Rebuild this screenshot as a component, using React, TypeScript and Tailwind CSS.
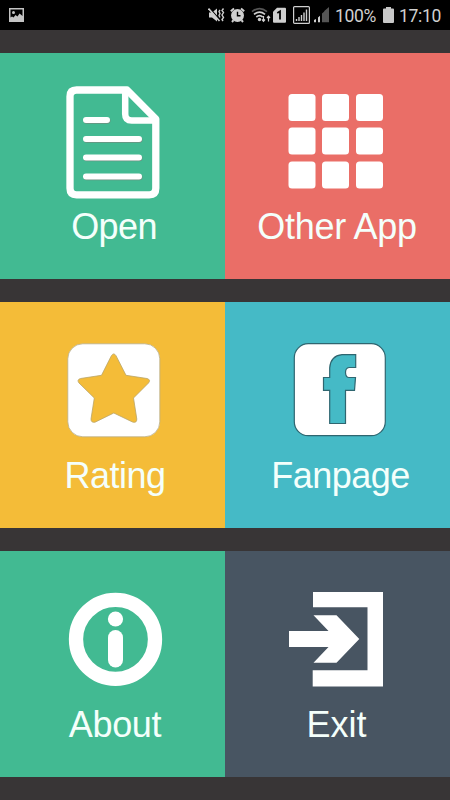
import React from 'react';

type TileProps = {
  label: string;
  bg: string;
  labelClass: string;
  children: React.ReactNode;
};

function PictureIcon() {
  return (
    <svg width="15" height="14" viewBox="0 0 15 14">
      <path fill="#c4c4c4" fillRule="evenodd" d="M0 0h15v14H0zM1.5 1.5v8L3 8.5l1.5 1L6.5 7l2 1.5 2-3 3 2.5V1.5z" />
      <circle cx="4.5" cy="4.5" r="1.5" fill="#c4c4c4" />
    </svg>
  );
}

function MuteIcon() {
  return (
    <svg width="17" height="16" viewBox="0 0 17 16" fill="none" stroke="#cfcfcf">
      <path d="M1 5.5h3L9 1.5v13L4 10.5H1z" fill="#cfcfcf" stroke="none" />
      <path d="M1.5 1 12 13" stroke="#000" strokeWidth="1.2" />
      <path d="M.5 1.5 11.5 14" strokeWidth="1.6" />
      <path d="M12 3l-1 1.5 1 2-1 2 1 2M15.5 1.5l-1.5 2 1.5 2-1.5 2.5 1.5 2.5-1.5 2 1 1.5" strokeWidth="1.4" />
    </svg>
  );
}

function AlarmIcon() {
  return (
    <svg width="15" height="16" viewBox="0 0 15 16">
      <circle cx="7.5" cy="8.5" r="6.5" fill="#cfcfcf" />
      <path d="M.8 4.2 4 1.5M14.2 4.2 11 1.5M3.5 13.2 2 15M11.5 13.2 13 15" stroke="#cfcfcf" strokeWidth="2" />
      <path d="M7.5 4.8v4h3" stroke="#000" strokeWidth="1.4" fill="none" />
    </svg>
  );
}

function WifiIcon() {
  return (
    <svg width="20" height="16" viewBox="0 0 20 16" fill="none" stroke="#cfcfcf" strokeWidth="1.7">
      <path d="M1 4.6q7.5-6 15 0" stroke="#555" />
      <path d="M3 7.3q5.500-4.500 11 0M5.300 10q3.200-2.600 6.400 0" />
      <circle cx="8.500" cy="12.500" r="1.700" fill="#cfcfcf" stroke="none" />
      <path d="M12.500 9v5M11 12.500l1.500 1.800 1.500-1.800M17.500 14.500V9.500M16 11l1.500-1.800L19 11" strokeWidth="1.200" />
    </svg>
  );
}

function SimIcon() {
  return (
    <svg width="13" height="16" viewBox="0 0 13 16">
      <path d="M4 .8h8q1 0 1 1v12.900q0 1-1 1H1q-1 0-1-1V4.800z" fill="#cfcfcf" />
      <path d="M4.300 6 7 4.300v8.200" stroke="#000" strokeWidth="1.800" fill="none" />
    </svg>
  );
}

function BoxedSignalIcon() {
  return (
    <svg width="17" height="18" viewBox="0 0 17 18">
      <rect x=".6" y=".6" width="15.8" height="16.8" rx="1" fill="none" stroke="#cfcfcf" strokeWidth="1.2" />
      <path d="M3.5 15v-2M6 15v-4M8.5 15V9M11 15V6.5M13.5 15V3.5" stroke="#cfcfcf" strokeWidth="1.4" />
    </svg>
  );
}

function SignalIcon() {
  return (
    <svg width="15" height="16" viewBox="0 0 15 16">
      <path d="M0 15.3v-2.3l2-1v3.3zM4 15.3v-4.8l2-1.8v6.6z" fill="#cfcfcf" />
      <path d="M8 15.3V6.5l2.300-2v10.800zM10.300 15.300V4L15 0v15.300z" fill="#555" />
    </svg>
  );
}

function BatteryIcon() {
  return (
    <svg width="11" height="16" viewBox="0 0 11 16">
      <path d="M3 0h5v1.5h2q1 0 1 1V15q0 1-1 1H1q-1 0-1-1V2.5q0-1 1-1h2z" fill="#c8c8c8" />
    </svg>
  );
}

function StatusBar() {
  return (
    <header className="flex h-[30px] items-center bg-black pl-[9px] text-[17.5px] text-[#d0d0d0] font-['Roboto',sans-serif]">
      <PictureIcon />
      <div className="ml-auto flex w-[242px] items-center">
        <MuteIcon />
        <span className="ml-[5px]"><AlarmIcon /></span>
        <span className="ml-[6px]"><WifiIcon /></span>
        <span className="ml-[2px]"><SimIcon /></span>
        <span className="ml-[7px]"><BoxedSignalIcon /></span>
        <span className="ml-[4px]"><SignalIcon /></span>
        <span className="ml-[6px] w-[42px] pt-[2px] leading-[20px] tracking-[-0.3px]">100%</span>
        <span className="ml-[6px]"><BatteryIcon /></span>
        <span className="ml-[5px] pt-[2px] leading-[20px] tracking-[-0.3px]">17:10</span>
      </div>
    </header>
  );
}

function OpenIcon() {
  return (
    <svg width="100" height="120" viewBox="63 83 100 120" fill="none" strokeLinecap="round" strokeLinejoin="round">
      <g stroke="#6f8f80" strokeWidth="6" transform="translate(.5 .8)">
        <path d="M86 120h21M86 139h53M86 157.500h53M86 176.500h53" />
      </g>
      <g stroke="#fff">
        <path d="M76.500 90H127L155.800 119V188.300q0 6.500-6.500 6.500H76.500q-6.500 0-6.500-6.500V96.500q0-6.500 6.500-6.500z" strokeWidth="7.300" />
        <path d="M125.200 91.500V114q0 6.500 6.500 6.500h23" strokeWidth="6.500" />
        <path d="M86 120h21M86 139h53M86 157.500h53M86 176.500h53" strokeWidth="6" />
      </g>
    </svg>
  );
}

const GRID_X = [288.5, 322, 356];
const GRID_Y = [94, 127.5, 161.5];

function GridIcon() {
  return (
    <svg width="100" height="120" viewBox="288 83 100 120" fill="#fff">
      {GRID_Y.map((y) =>
        GRID_X.map((x) => <rect key={`${x}-${y}`} x={x} y={y} width="27" height="27" rx="3.5" />)
      )}
    </svg>
  );
}

function StarIcon() {
  return (
    <svg width="100" height="120" viewBox="63 332 100 120">
      <rect x="67.8" y="343.8" width="92" height="93" rx="15" fill="#fff" stroke="#b9ae8a" strokeWidth=".8" />
      <path
        d="M111.400 355.700q2.400-3.600 4.600 0L126 375.300L147 378.500q4.200 1.200 1.500 4.500L133.500 398L136.800 419q0 4.400-4.300 3L113.800 413L95 422.200q-4 .8-4-3.200L94.300 398L79 383q-2.500-3.300 1.500-4.500L101.500 375.300z"
        fill="#f4bc38"
        stroke="#b9a468"
        strokeWidth=".8"
      />
    </svg>
  );
}

function FacebookIcon() {
  return (
    <svg width="100" height="120" viewBox="288 332 100 120" stroke="#2f6670">
      <rect x="294.300" y="343.700" width="91" height="92" rx="14" fill="#fff" strokeWidth="1.200" />
      <path
        d="M329.700 423.500V390.300H323.500V377.500H329.700V368Q330.500 356 342 354.700H355.700V367.500H349Q345.500 368 345.500 372.500Q345.700 377.500 349 377.500H355.500L354.500 390.300H345.500V423.500z"
        fill="#45bac6"
        strokeWidth="1.200"
      />
    </svg>
  );
}

function InfoIcon() {
  return (
    <svg width="100" height="120" viewBox="63 581 100 120" fill="#fff">
      <circle cx="115.500" cy="639.300" r="39.500" fill="none" stroke="#fff" strokeWidth="14.300" />
      <circle cx="115.500" cy="619" r="7.600" />
      <rect x="108" y="630" width="15" height="37.500" rx="7.500" />
    </svg>
  );
}

function ExitIcon() {
  return (
    <svg width="100" height="120" viewBox="288 581 100 120" fill="#fff">
      <path d="M313 592H383V686.500H312.700V670.300H367.500V607.300H313z" />
      <path d="M289 631H328.500L313.500 615.300H336.500L359.300 639L336.500 662.700H313.500L328.500 647H289z" />
    </svg>
  );
}

function Tile({ label, bg, labelClass, children }: TileProps) {
  return (
    <button className={`flex h-[226px] flex-col items-center pt-[30px] ${bg}`}>
      {children}
      <span className={`mt-[4px] whitespace-nowrap text-[36px] leading-[40px] text-[#f4fffb] ${labelClass}`}>{label}</span>
    </button>
  );
}

export default function App() {
  return (
    <div className="h-[800px] w-[450px] overflow-hidden bg-[#383536] font-['Liberation_Sans',Arial,sans-serif]">
      <StatusBar />
      <main className="mt-[23px] grid grid-cols-2 gap-y-[23px]">
        <Tile label="Open" bg="bg-[#42ba92]" labelClass="pl-[3px] tracking-[-0.6px]">
          <OpenIcon />
        </Tile>
        <Tile label="Other App" bg="bg-[#ea6e67]" labelClass="pr-[1px] tracking-[-0.3px]">
          <GridIcon />
        </Tile>
        <Tile label="Rating" bg="bg-[#f4bc38]" labelClass="pl-[5px] tracking-[-0.5px]">
          <StarIcon />
        </Tile>
        <Tile label="Fanpage" bg="bg-[#45bac6]" labelClass="pl-[6px] tracking-[-0.5px]">
          <FacebookIcon />
        </Tile>
        <Tile label="About" bg="bg-[#42ba92]" labelClass="pl-[5px] tracking-[-0.3px]">
          <InfoIcon />
        </Tile>
        <Tile label="Exit" bg="bg-[#485562]" labelClass="pr-[2px]">
          <ExitIcon />
        </Tile>
      </main>
    </div>
  );
}
